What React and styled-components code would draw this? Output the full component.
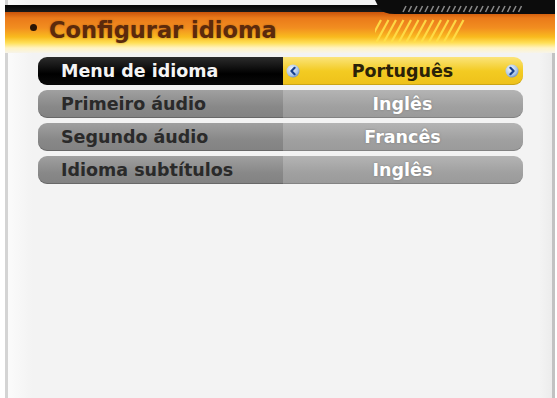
import React from 'react'
import styled, { createGlobalStyle } from 'styled-components'

const rows = [
  { label: 'Menu de idioma', value: 'Português', active: true },
  { label: 'Primeiro áudio', value: 'Inglês' },
  { label: 'Segundo áudio', value: 'Francês' },
  { label: 'Idioma subtítulos', value: 'Inglês' },
]

export default function App() {
  return (
    <Frame>
      <GlobalStyle />
      <Screen>
        <Header>
          <Hatch width="180" height="48" viewBox="0 0 180 48">
            <path d="M0 0 H180 V14 H20 Q8 14 4 8 Z" fill="#0c0c0c" />
            {Array.from({ length: 22 }).map((_, i) => (
              <line key={'t' + i} x1={28 + i * 5.5} y1="12" x2={31 + i * 5.5} y2="6" stroke="#8a8a8a" strokeWidth="1.6" />
            ))}
            {Array.from({ length: 12 }).map((_, i) => (
              <line key={'y' + i} x1={-6 + i * 7.5} y1="42" x2={6 + i * 7.5} y2="20" stroke="#ffe04a" strokeWidth="2.2" opacity="0.9" />
            ))}
          </Hatch>
          <Title>
            <Bullet />
            Configurar idioma
          </Title>
        </Header>
        <List>
          {rows.map((r) => (
            <Row key={r.label}>
              <Label $active={r.active}>{r.label}</Label>
              <Value $active={r.active}>
                {r.active && (
                  <Arrow viewBox="0 0 14 14">
                    <circle cx="7" cy="7" r="6.5" fill="url(#ball)" />
                    <path d="M8.6 3.8 L5.4 7 L8.6 10.2" fill="none" stroke="#173f8c" strokeWidth="2.2" strokeLinecap="round" strokeLinejoin="round" />
                  </Arrow>
                )}
                <ValueText>{r.value}</ValueText>
                {r.active && (
                  <Arrow viewBox="0 0 14 14">
                    <circle cx="7" cy="7" r="6.5" fill="url(#ball)" />
                    <path d="M5.4 3.8 L8.6 7 L5.4 10.2" fill="none" stroke="#173f8c" strokeWidth="2.2" strokeLinecap="round" strokeLinejoin="round" />
                  </Arrow>
                )}
              </Value>
            </Row>
          ))}
        </List>
        <svg width="0" height="0">
          <defs>
            <radialGradient id="ball" cx="40%" cy="35%" r="70%">
              <stop offset="0%" stopColor="#f4f8ff" />
              <stop offset="70%" stopColor="#a9c4e6" />
              <stop offset="100%" stopColor="#5f86c4" />
            </radialGradient>
          </defs>
        </svg>
      </Screen>
    </Frame>
  )
}

const GlobalStyle = createGlobalStyle`
  body {
    margin: 0;
    background: #ffffff;
    font-family: "DejaVu Sans", "Liberation Sans", sans-serif;
  }
`

const Frame = styled.div`
  width: 557px;
  height: 398px;
  overflow: hidden;
  background: #ffffff;
  padding: 0 2px 0 5px;
  box-sizing: border-box;
`

const Screen = styled.div`
  height: 100%;
  display: flex;
  flex-direction: column;
  border-left: 3px solid #d4d4d4;
  border-right: 3px solid #c2c2c2;
  background: linear-gradient(to right, #fbfbfb 0, #f3f3f3 24px, #f3f3f3 calc(100% - 12px), #ececec 100%);
`

const Header = styled.div`
  position: relative;
  height: 48px;
  margin-top: 5px;
  margin-left: -3px;
  margin-right: -3px;
  background: linear-gradient(
    to bottom,
    #050505 0,
    #1a1a1a 7px,
    #c9530a 7px,
    #ea7a1a 13px,
    #f28e20 23px,
    #f9bb1e 32px,
    #ffe05a 38px,
    #fff3c4 43px,
    #f7f4ea 48px
  );
`

const Hatch = styled.svg`
  position: absolute;
  right: 0;
  top: -5px;
`

const Title = styled.div`
  position: relative;
  display: flex;
  align-items: center;
  gap: 12px;
  padding: 12px 0 0 25px;
  font-weight: bold;
  font-size: 22.5px;
  color: #5c2a0c;
  text-shadow: 0 0 2px rgba(120, 50, 0, 0.5);
`

const Bullet = styled.span`
  width: 7px;
  height: 7px;
  border-radius: 50%;
  background: #2b1405;
  margin-top: -6px;
`

const List = styled.div`
  display: flex;
  flex-direction: column;
  gap: 5px;
  padding: 4px 0 0 30px;
`

const Row = styled.div`
  display: grid;
  grid-template-columns: 245px 240px;
  height: 28px;
`

const Label = styled.div`
  display: flex;
  align-items: center;
  padding-left: 23px;
  border-radius: 9px 0 0 9px;
  font-weight: bold;
  font-size: 17.5px;
  color: ${(p) => (p.$active ? '#f4f4f4' : '#2a2a2a')};
  background: ${(p) =>
    p.$active
      ? 'linear-gradient(to bottom, #2c2c2c, #000000 60%, #0a0a0a)'
      : 'linear-gradient(to bottom, #a0a0a0, #888888 60%, #828282)'};
  box-shadow: inset 0 -1px 0 rgba(0, 0, 0, 0.2);
`

const Value = styled.div`
  display: flex;
  align-items: center;
  padding: 0 4px 0 3px;
  border-radius: 0 9px 9px 0;
  font-weight: bold;
  font-size: 17.5px;
  color: ${(p) => (p.$active ? '#2a2208' : '#ffffff')};
  text-shadow: ${(p) => (p.$active ? 'none' : '0 0 2px rgba(90,90,90,0.6)')};
  background: ${(p) =>
    p.$active
      ? 'linear-gradient(to bottom, #fbe47a, #f3cb22 50%, #eec11a)'
      : 'linear-gradient(to bottom, #b4b4b4, #a0a0a0 60%, #9a9a9a)'};
  box-shadow: inset 0 -1px 0 rgba(0, 0, 0, 0.15);
`

const ValueText = styled.span`
  flex: 1;
  text-align: center;
`

const Arrow = styled.svg`
  width: 14px;
  height: 14px;
  flex: none;
`
